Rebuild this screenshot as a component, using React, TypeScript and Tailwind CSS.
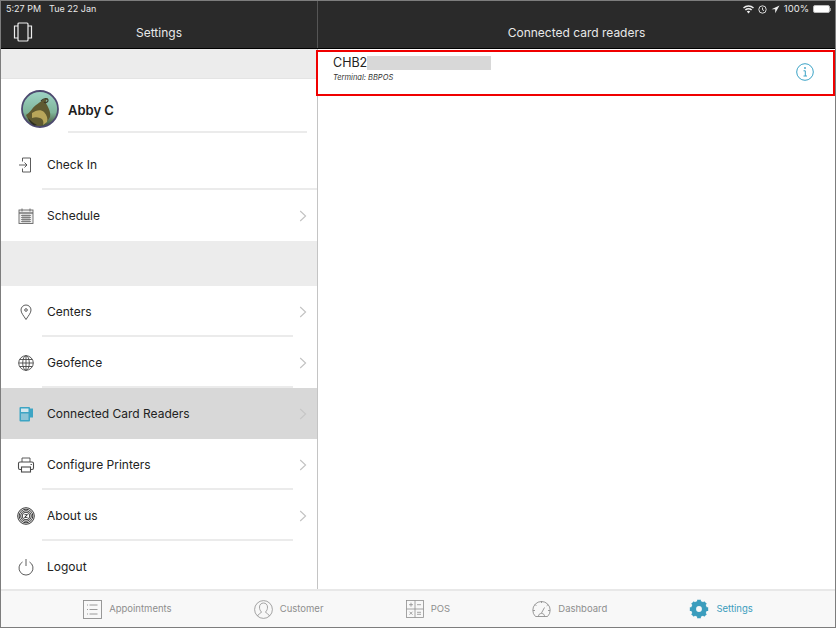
import type { ReactNode } from 'react';

const FONT = { fontFamily: 'Inter, "Liberation Sans", sans-serif' };

function Chevron({ faint = false }: { faint?: boolean }) {
  return (
    <svg width="8" height="12" viewBox="0 0 8 12" fill="none" stroke="currentColor" strokeWidth="1.100" className={faint ? 'text-[#c6c6c6]' : 'text-[#c2c2c2]'}>
      <path d="M1.200 1l5.400 5-5.400 5" />
    </svg>
  );
}

function Icon({ size = 20, children, className = 'text-[#4a4a4a]' }: { size?: number; children: ReactNode; className?: string }) {
  return (
    <svg width={size} height={size} viewBox="0 0 20 20" fill="none" stroke="currentColor" strokeWidth="0.900" className={className}>
      {children}
    </svg>
  );
}

const CheckInIcon = () => (
  <Icon>
    <path d="M6.500 6.500V3h8v14h-8v-3.500" />
    <path d="M3 10h8M8.500 7.500L11 10l-2.500 2.500" />
  </Icon>
);
const ScheduleIcon = () => (
  <Icon className="text-[#666]">
    <rect x="3" y="4" width="14" height="13.500" fill="#eeeeee" />
    <path d="M3 7h14" strokeWidth="1.300" />
    <path d="M6 2.500v3M14 2.500v3" />
    <path d="M5 9.500h10M5 11.500h10M5 13.500h10M5 15.500h10M7 8.500v8M9 8.500v8M11 8.500v8M13 8.500v8" strokeWidth="0.700" />
  </Icon>
);
const PinIcon = () => (
  <Icon>
    <path d="M10 17.500C7.500 13.500 5 11 5 8a5 5 0 0110 0c0 3-2.500 5.500-5 9.500z" />
    <circle cx="10" cy="8" r="1.300" />
  </Icon>
);
const GlobeIcon = () => (
  <Icon>
    <circle cx="10" cy="10" r="7.300" />
    <ellipse cx="10" cy="10" rx="3.300" ry="7.300" />
    <path d="M10 2.700v14.600M2.700 10h14.600M3.700 6.500h12.600M3.700 13.500h12.600" />
  </Icon>
);
const CardReaderIcon = () => (
  <svg width="20" height="20" viewBox="0 0 20 20">
    <rect x="3.500" y="3" width="10.500" height="14.500" rx="1" fill="#3da5c4" />
    <rect x="5" y="4.500" width="7.500" height="3.500" fill="#d5e8ee" />
    <rect x="5" y="9.500" width="7.500" height="6.500" fill="#8cc4d6" />
    <rect x="14" y="4.500" width="3" height="9" fill="#3da5c4" />
  </svg>
);
const PrinterIcon = () => (
  <Icon>
    <path d="M6 7V3h8v4" />
    <rect x="2.500" y="7" width="15" height="7.500" rx="1.500" strokeWidth="1.100" />
    <rect x="5.500" y="12" width="9" height="5" fill="#fff" strokeWidth="1.100" />
    <path d="M14.500 9.500h1.500" />
  </Icon>
);
const AboutIcon = () => (
  <Icon className="text-[#222]">
    <circle cx="10" cy="10" r="8.300" />
    <circle cx="10" cy="10" r="6.800" />
    <circle cx="10" cy="10" r="5.300" />
    <circle cx="10" cy="10" r="3.800" />
    <path d="M8.500 8.700h3l-3 2.700h3" />
  </Icon>
);
const PowerIcon = () => (
  <Icon>
    <path d="M6.500 5A7 7 0 1013.500 5" />
    <path d="M10 2v7" />
  </Icon>
);

function Avatar() {
  return (
    <svg width="38" height="38" viewBox="0 0 38 38" className="shrink-0">
      <defs>
        <linearGradient id="sky" x1="0" y1="0" x2="0" y2="1">
          <stop offset="0" stopColor="#9fd4c6" />
          <stop offset="0.6" stopColor="#7fb59a" />
          <stop offset="1" stopColor="#40492c" />
        </linearGradient>
      </defs>
      <circle cx="19" cy="19" r="18" fill="url(#sky)" stroke="#4d4a70" strokeWidth="1.800" />
      <path d="M5 25c4-2 6-7 10-10 3-2 7-6 12-7-2 2-3 4-1 7 2 4 4 8 3 12-2 4-6 8-10 9-6 0-11-4-14-11z" fill="#5f5a30" />
      <path d="M11 23c4-3 9-4 12-1 3 3 4 7 3 10l-4 3c1-3 0-6-3-7-3-1-5-1-8 0z" fill="#b8a65a" />
      <path d="M7 28c3 3 5 5 9 7l-3 .5C10 34 8 31 7 28z" fill="#2c2c20" />
      <path d="M20 11c3-3 7-3 7-.5 0 2-3 2.500-4 1.500" fill="none" stroke="#3d3a28" strokeWidth="1.200" />
    </svg>
  );
}

function Row({ icon, label, chevron = true, fullLine = false, noLine = false, selected = false }: {
  icon: ReactNode;
  label: string;
  chevron?: boolean;
  fullLine?: boolean;
  noLine?: boolean;
  selected?: boolean;
}) {
  return (
    <div className={`relative flex h-[51px] shrink-0 items-center pl-[15px] pr-[10px] ${selected ? 'bg-[#d8d8d8]' : 'bg-white'}`}>
      <div className="flex w-[31px] shrink-0 items-center">{icon}</div>
      <span className="flex-1 pt-px text-[12px] text-[#222]">{label}</span>
      {chevron && <Chevron faint={selected} />}
      {!noLine && !selected && (
        <div className={`absolute bottom-0 left-[41px] h-[2px] bg-[#ebebeb] ${fullLine ? 'right-0' : 'right-[24px]'}`} />
      )}
    </div>
  );
}

function TabItem({ icon, label, active = false }: { icon: ReactNode; label: string; active?: boolean }) {
  return (
    <div className="flex items-center gap-[7px]">
      {icon}
      <span className={`text-[9.500px] ${active ? 'text-[#3b9dbd]' : 'text-[#8e8e8e]'}`}>{label}</span>
    </div>
  );
}

export default function App() {
  return (
    <div style={FONT} className="flex h-[628px] w-[836px] flex-col overflow-hidden border border-[#7d7d7d] bg-white">
      <header className="h-[47px] shrink-0 bg-[#2a2a2a] text-white">
        <div className="flex h-full">
          <div className="flex w-[317px] flex-col border-r border-[#555]">
            <div className="flex h-[16px] items-center gap-[8px] pl-[5px] text-[9px] text-[#e8e8e8]">
              <span>5:27 PM</span>
              <span>Tue 22 Jan</span>
            </div>
            <div className="relative flex flex-1 items-center justify-center text-[12px] text-[#e8e8e8]">
              <svg width="20" height="20" viewBox="0 0 20 20" fill="none" stroke="#eee" strokeWidth="1.200" className="absolute left-[12px] top-[5px]">
                <rect x="5" y="1" width="10" height="18" rx="1" />
                <path d="M5 4H1.500v12H5M15 4h3.500v12H15" />
              </svg>
              Settings
            </div>
          </div>
          <div className="flex flex-1 flex-col">
            <div className="flex h-[16px] items-center justify-end gap-[4px] pr-[4px] text-[9.500px] text-[#e8e8e8]">
              <svg width="11" height="9" viewBox="0 0 11 9" fill="#eee">
                <path d="M5.500 8.500L3.800 6.600a2.500 2.500 0 013.400 0zM2.900 5.600L1.800 4.400a5.500 5.500 0 017.400 0L8.100 5.600a4 4 0 00-5.200 0zM1 3.500L0 2.400a8 8 0 0111 0L10 3.500a6.600 6.600 0 00-9 0z" />
              </svg>
              <svg width="9" height="9" viewBox="0 0 9 9" fill="none" stroke="#eee" strokeWidth="0.900">
                <circle cx="4.500" cy="4.500" r="3.700" />
                <path d="M4.500 2.500v2.300l1.500.8" />
              </svg>
              <svg width="9" height="9" viewBox="0 0 9 9" fill="#eee">
                <path d="M8.500.5L.5 4.300h3.700v3.900z" />
              </svg>
              <span>100%</span>
              <div className="flex items-center">
                <div className="h-[8px] w-[17px] rounded-[2px] border border-[#bbb] bg-white" />
                <div className="h-[3px] w-px bg-[#999]" />
              </div>
            </div>
            <div className="flex flex-1 items-center justify-center text-[12px] text-[#e8e8e8]">Connected card readers</div>
          </div>
        </div>
      </header>
      <div className="h-px shrink-0 bg-black" />

      <div className="flex min-h-0 flex-1">
        <aside className="flex w-[317px] shrink-0 flex-col overflow-hidden border-r border-[#c4c4c4]">
          <div className="h-[30px] shrink-0 border-b border-[#e4e4e4] bg-[#ececec]" />
          <div className="relative flex h-[60px] shrink-0 items-start pl-[20px] pt-[11px]">
            <Avatar />
            <span className="ml-[9px] mt-[11px] text-[13px] font-semibold text-[#1d1d1d]">Abby C</span>
            <div className="absolute bottom-[6px] left-[67px] right-[10px] h-[2px] bg-[#ebebeb]" />
          </div>
          <Row icon={<CheckInIcon />} label="Check In" chevron={false} fullLine />
          <Row icon={<ScheduleIcon />} label="Schedule" noLine />
          <div className="h-[45px] shrink-0 bg-[#ececec]" />
          <Row icon={<PinIcon />} label="Centers" />
          <Row icon={<GlobeIcon />} label="Geofence" />
          <Row icon={<CardReaderIcon />} label="Connected Card Readers" selected />
          <Row icon={<PrinterIcon />} label="Configure Printers" />
          <Row icon={<AboutIcon />} label="About us" />
          <Row icon={<PowerIcon />} label="Logout" chevron={false} noLine />
        </aside>

        <main className="min-w-0 flex-1">
          <div className="-ml-[2px] mt-px flex h-[46px] items-start justify-between border-2 border-[#f00000] pl-[15px] pr-[19px]">
            <div className="pt-[3px]">
              <div className="flex items-center text-[12.500px] leading-[15px] text-[#222]">
                CHB2
                <div className="h-[14px] w-[124px] bg-[#d8d8d8]" />
              </div>
              <div className="mt-[2px] text-[7.500px] italic text-[#333]">Terminal: BBPOS</div>
            </div>
            <svg width="18" height="18" viewBox="0 0 18 18" fill="none" stroke="#3ba3c6" strokeWidth="1" className="mt-[11px]">
              <circle cx="9" cy="9" r="8.300" />
              <path d="M7.500 7.800H9.300V13M7.500 13h3.500" />
              <circle cx="9" cy="5" r="0.900" fill="#3ba3c6" stroke="none" />
            </svg>
          </div>
        </main>
      </div>

      <nav className="flex h-[38px] shrink-0 items-center justify-evenly border-t-2 border-[#e8e8e8] bg-[#f8f8f8]">
        <TabItem
          label="Appointments"
          icon={
            <svg width="19" height="19" viewBox="0 0 19 19" fill="none" stroke="#8e8e8e" strokeWidth="0.900">
              <rect x="0.500" y="0.500" width="18" height="18" />
              <path d="M6.500 5h8M6.500 9.500h8M6.500 14h8M4 5h1M4 9.500h1M4 14h1" />
            </svg>
          }
        />
        <TabItem
          label="Customer"
          icon={
            <svg width="19" height="19" viewBox="0 0 19 19" fill="none" stroke="#8e8e8e" strokeWidth="0.800">
              <circle cx="9.500" cy="9.500" r="8.900" />
              <path d="M3.500 16c.5-2 3.500-2.500 4-4-1.500-1.500-2-3-2-5 0-2.300 1.800-4 4-4s4 1.700 4 4c0 2-.5 3.500-2 5 .5 1.500 3.500 2 4 4" />
            </svg>
          }
        />
        <TabItem
          label="POS"
          icon={
            <svg width="18" height="18" viewBox="0 0 18 18" fill="none" stroke="#8e8e8e" strokeWidth="0.800">
              <rect x="0.500" y="0.500" width="17" height="17" />
              <path d="M9 .5v17M.5 9h17M3 4.700h4M5 2.700v4M11 4.700h4M3.500 11.700l3 3M6.500 11.700l-3 3M11 12.300h4M11 14.300h4" />
            </svg>
          }
        />
        <TabItem
          label="Dashboard"
          icon={
            <svg width="19" height="19" viewBox="0 0 19 19" fill="none" stroke="#8e8e8e" strokeWidth="0.900">
              <path d="M3.500 16.500A8.700 8.700 0 1115.500 16.500H3.500z" />
              <path d="M9.500 13l3-5.500M6.500 16.500c0-2 1-3 3-3s3 1 3 3M9.500 1v2M3 4.500l1.300 1.300M16 4.500l-1.300 1.300M1 10.500h2M16 10.500h2" />
            </svg>
          }
        />
        <TabItem
          active
          label="Settings"
          icon={
            <svg width="20" height="20" viewBox="0 0 24 24" fill="none" stroke="#3b9dbd">
              <circle cx="12" cy="12" r="6.500" strokeWidth="6" />
              <path d="M12 1v4M12 19v4M1 12h4M19 12h4M4.200 4.200l2.800 2.800M17 17l2.800 2.800M4.200 19.800L7 17M17 7l2.800-2.800" strokeWidth="4.500" />
            </svg>
          }
        />
      </nav>
    </div>
  );
}
